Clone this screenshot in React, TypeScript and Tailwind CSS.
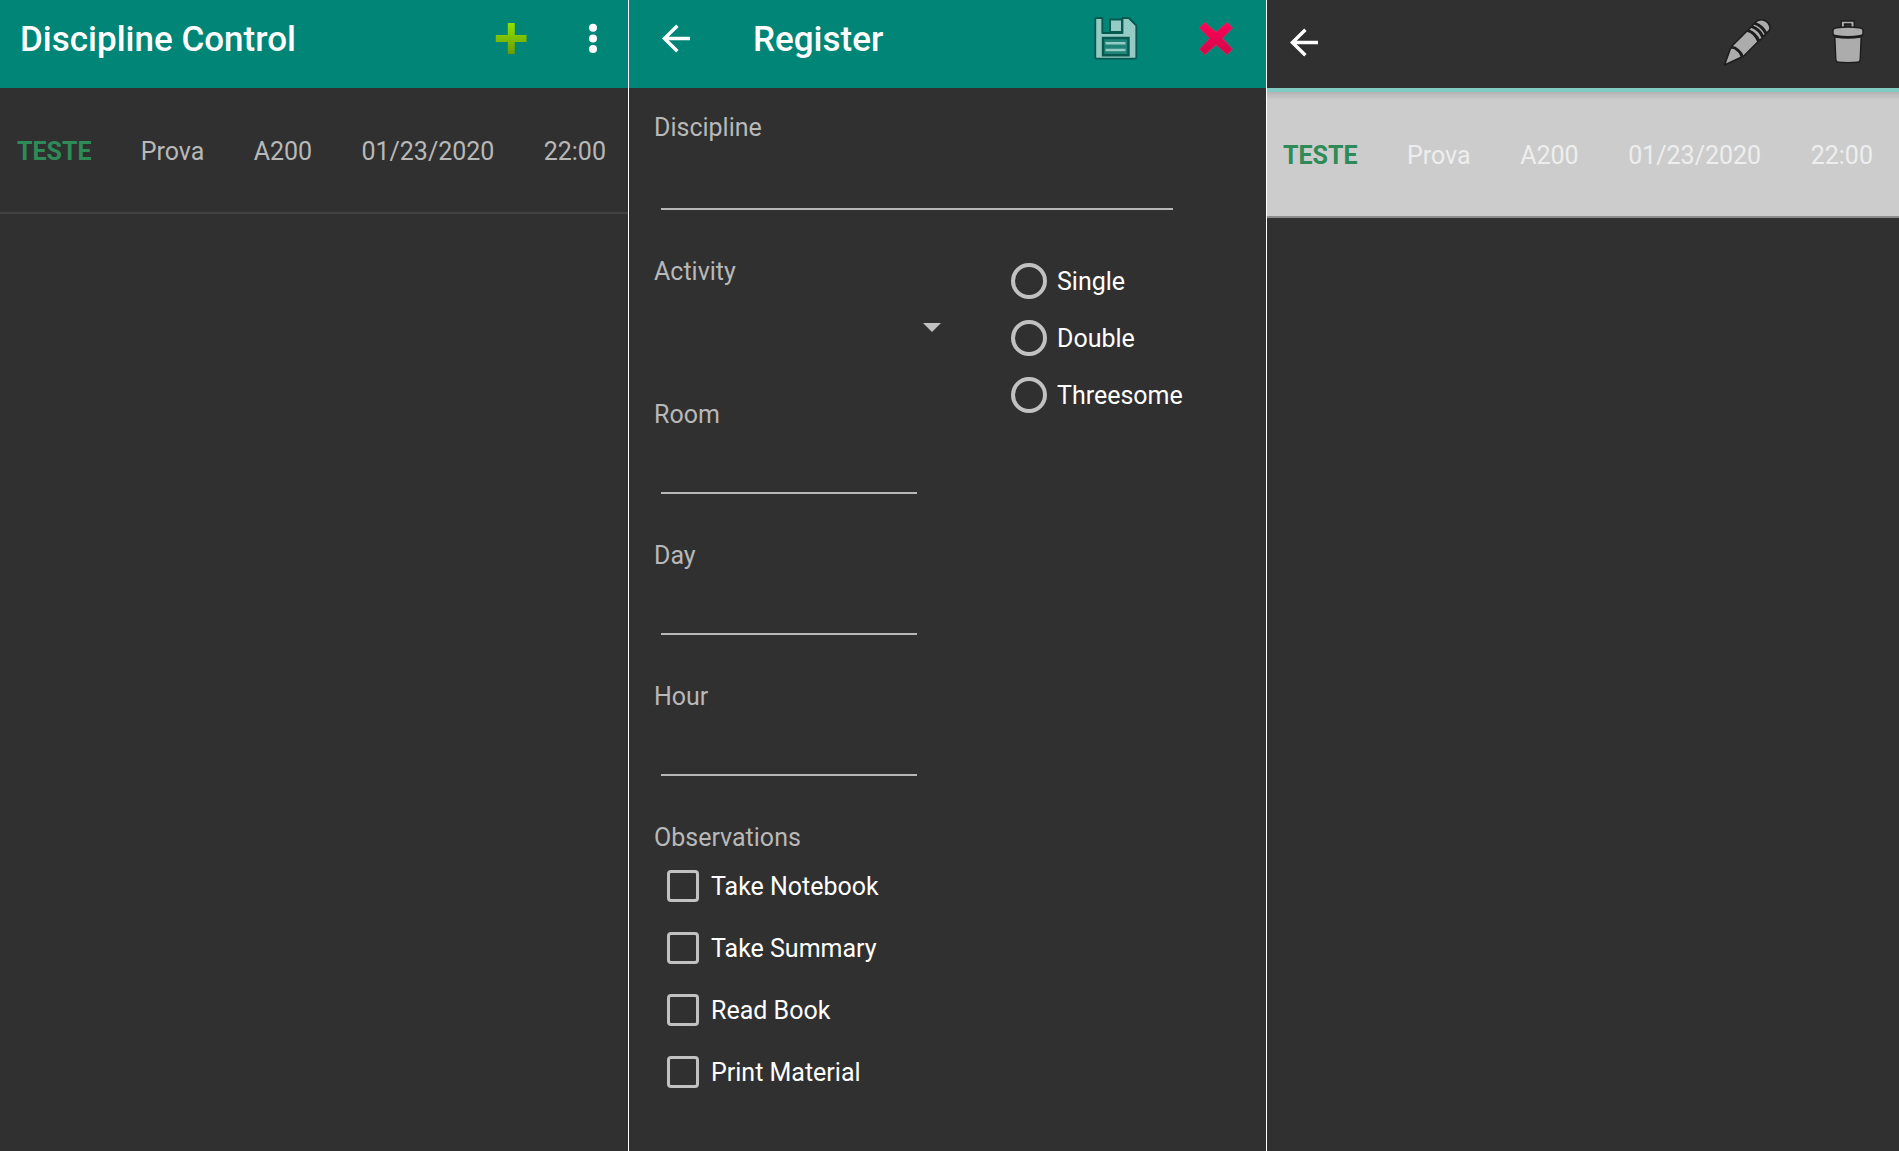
import type { ReactNode } from "react";

function ArrowIcon() {
  return (
    <svg viewBox="0 0 48 48" className="size-12" fill="none" stroke="#fff" strokeWidth="3.4" aria-hidden="true">
      <path d="M38 24.500H12.500M25.400 11.700 12.400 24.500l13 12.800" />
    </svg>
  );
}

function PlusIcon() {
  return (
    <svg viewBox="0 0 48 48" className="size-12" aria-hidden="true">
      <defs>
        <linearGradient id="plusFill" x1="0" y1="0" x2="0" y2="1">
          <stop offset="0" stopColor="#8fe300" />
          <stop offset="1" stopColor="#6b9a00" />
        </linearGradient>
      </defs>
      <path d="M20.8 9h7v12h11.7v7H27.8v12h-7V28H8.8v-7h12z" fill="url(#plusFill)" />
    </svg>
  );
}

function DotsIcon() {
  return (
    <svg viewBox="0 0 48 48" className="size-12" fill="#fff" aria-hidden="true">
      <circle cx="24" cy="13.7" r="4" />
      <circle cx="24" cy="24.4" r="4" />
      <circle cx="24" cy="35.1" r="4" />
    </svg>
  );
}

function SaveIcon() {
  return (
    <svg viewBox="0 0 48 48" className="size-12" aria-hidden="true">
      <path
        d="M4.5 4h5.800v15H30.500V4h6.300l7.500 7.500v31.700q0 1.500-1.500 1.500H4.800q-1.500 0-1.500-1.500V5.200Q3.300 4 4.500 4z"
        fill="#94cbc4"
        stroke="#07584e"
        strokeWidth="1.8"
        strokeLinejoin="round"
      />
      <path d="M18 5.500h12V18H18z" fill="#94cbc4" stroke="#07584e" strokeWidth="2" />
      <path d="M11 24h25.500v17.200H11z" fill="#1f8377" stroke="#07584e" strokeWidth="2.400" />
      <path d="M13.500 29.200h20M13.500 36h20" stroke="#94cbc4" strokeWidth="2.400" />
    </svg>
  );
}

function CrossIcon() {
  return (
    <svg viewBox="0 0 48 48" className="size-12" aria-hidden="true">
      <defs>
        <linearGradient id="crossFill" x1="0" y1="0" x2="0" y2="1">
          <stop offset="0" stopColor="#ff0559" />
          <stop offset="1" stopColor="#d30548" />
        </linearGradient>
      </defs>
      <path
        d="M12.800 8.300 24 18 35.200 8.300l5.400 5.600L30.500 24.300l10.100 10.900-5.400 5.600L24 31 12.800 40.800l-5.400-5.600L17.500 24.300 7.400 13.900z"
        fill="url(#crossFill)"
        stroke="#b8405f"
        strokeWidth="0.8"
      />
    </svg>
  );
}

function PencilIcon() {
  return (
    <svg viewBox="0 0 48 48" className="size-12" fill="#acacac" stroke="#1c1c1c" strokeWidth="1.5" strokeLinejoin="round" aria-hidden="true">
      <path d="M1.500 47 7.600 30.300q3.600-1 6.400 2.200 3.500 2 4.300 6.800z" />
      <path d="M8.500 28.500 24 13q7.500 1.800 11 10.800L20 38.800q-.8-4-4.500-7-3-3-7-3.300z" />
      <path d="M25.300 12 28 9q8 2.500 11.300 10.800l-2.800 3Q33 14.500 25.300 12z" />
      <path d="M29 8l2-2.300q8 2.500 11.500 10.500l-2 2.300Q37 10.500 29 8z" />
      <path d="M32 4.800q3.500-4.300 9-2.600 5 2 6 7.300.3 3.500-3.500 5.500Q40 7.500 32 4.800z" />
    </svg>
  );
}

function TrashIcon() {
  return (
    <svg viewBox="0 0 48 48" className="size-12" fill="#acacac" stroke="#1c1c1c" strokeWidth="1.400" strokeLinejoin="round" aria-hidden="true">
      <path d="M10.800 18.500h26.400l-1 23q-.2 2.500-2.600 2.700-9.600.8-19.200 0-2.400-.2-2.600-2.700z" />
      <path d="M17.200 10V3h13v7h-3.400V6h-6.200v4z" />
      <path d="M9 12.500q0-2 4-2.700 11-1.600 22 0 4 .7 4 2.700v3.200q0 1.500-3 2-12 1.800-24 0-3-.5-3-2z" />
      <path d="M11.500 18.800q12.500 2 25 0" fill="none" strokeWidth="2" />
    </svg>
  );
}

function IconButton({ label, children }: { label: string; children: ReactNode }) {
  return (
    <button type="button" aria-label={label} className="shrink-0">
      {children}
    </button>
  );
}

const entry = ["Prova", "A200", "01/23/2020", "22:00"];

function EntryCells({ label }: { label: string }) {
  return (
    <>
      <span className="font-bold text-[#2e8b57]">{label}</span>
      {entry.map((value) => (
        <span key={value}>{value}</span>
      ))}
    </>
  );
}

function Field({ id, label, className }: { id: string; label: string; className: string }) {
  return (
    <div className="flex flex-col">
      <label htmlFor={id} className="text-[#b8b8b8]">
        {label}
      </label>
      <input id={id} type="text" className={`ml-[7px] border-b-2 border-[#b8b8b8] bg-transparent text-white outline-none ${className}`} />
    </div>
  );
}

export default function App() {
  return (
    <div className="grid min-h-screen grid-cols-[629fr_638fr_632fr] bg-[#303030] font-['Roboto',sans-serif] text-[25px] leading-[30px]">
      <section className="min-w-0 border-r border-white">
        <header className="flex h-[88px] items-center bg-[#008577] pr-[11px] pb-3 pl-5">
          <h1 className="mt-1 flex-1 text-[35px] leading-10 font-medium text-white">Discipline Control</h1>
          <div className="flex gap-[34px]">
            <IconButton label="Add">
              <PlusIcon />
            </IconButton>
            <IconButton label="More options">
              <DotsIcon />
            </IconButton>
          </div>
        </header>
        <ul>
          <li className="flex h-[126px] items-center justify-between border-b-2 border-[#424242] pt-1 pr-[22px] pl-[17px] text-[#b8b8b8]">
            <EntryCells label="TESTE" />
          </li>
        </ul>
      </section>

      <section className="min-w-0 border-r border-white">
        <header className="flex h-[88px] items-center bg-[#008577] pr-[26px] pb-3 pl-[23px]">
          <IconButton label="Back">
            <ArrowIcon />
          </IconButton>
          <h1 className="mt-1 ml-[53px] flex-1 text-[35px] leading-10 font-medium text-white">Register</h1>
          <div className="flex gap-[52px]">
            <IconButton label="Save">
              <SaveIcon />
            </IconButton>
            <IconButton label="Cancel">
              <CrossIcon />
            </IconButton>
          </div>
        </header>

        <form className="flex flex-col gap-[47px] pt-[25px] pl-[25px]">
          <Field id="discipline" label="Discipline" className="mr-[93px] h-[67px]" />

          <div className="flex gap-[70px]">
            <div className="flex w-[287px] flex-col gap-[47px]">
              <div className="flex flex-col">
                <label htmlFor="activity" className="text-[#b8b8b8]">
                  Activity
                </label>
                <div className="relative flex items-center pt-4">
                  <select id="activity" className="h-[50px] w-full appearance-none bg-transparent pl-2 text-white outline-none">
                    <option value=""></option>
                    <option value="prova">Prova</option>
                  </select>
                  <svg viewBox="0 0 18 10" className="pointer-events-none absolute right-0 h-[10px] w-[18px]" fill="#c1c1c1" aria-hidden="true">
                    <path d="M0 0h18L9 9z" />
                  </svg>
                </div>
              </div>
              <Field id="room" label="Room" className="mr-6 h-[64px]" />
              <Field id="day" label="Day" className="mr-6 h-[64px]" />
              <Field id="hour" label="Hour" className="mr-6 h-[64px]" />
            </div>

            <fieldset className="flex flex-col gap-[21px] pt-[6px] text-white">
              {["Single", "Double", "Threesome"].map((name) => (
                <label key={name} className="flex h-9 items-center gap-[10px]">
                  <input
                    type="radio"
                    name="group"
                    value={name}
                    className="size-9 appearance-none rounded-full border-4 border-[#c1c1c1] checked:bg-[#008577]"
                  />
                  <span className="pt-[2px]">{name}</span>
                </label>
              ))}
            </fieldset>
          </div>

          <fieldset className="text-white">
            <legend className="text-[#b8b8b8]">Observations</legend>
            <div className="flex flex-col pt-[2px] pl-[13px]">
              {["Take Notebook", "Take Summary", "Read Book", "Print Material"].map((name) => (
                <label key={name} className="flex h-[62px] items-center gap-3">
                  <input type="checkbox" className="size-8 appearance-none rounded-[4px] border-[3px] border-[#c1c1c1] checked:bg-[#008577]" />
                  <span className="pt-[2px]">{name}</span>
                </label>
              ))}
            </div>
          </fieldset>
        </form>
      </section>

      <section className="min-w-0">
        <header className="flex h-[92px] items-center justify-between border-b-4 border-[#80cbc4] pr-[27px] pb-1 pl-[13px]">
          <IconButton label="Back">
            <ArrowIcon />
          </IconButton>
          <div className="flex gap-[53px]">
            <IconButton label="Edit">
              <PencilIcon />
            </IconButton>
            <IconButton label="Delete">
              <TrashIcon />
            </IconButton>
          </div>
        </header>
        <ul>
          <li className="flex h-[126px] items-center justify-between border-b-2 border-[#8c8c8c] bg-[#cccccc] bg-linear-to-b from-[#b4b4b4] to-[#cccccc] to-[8px] pt-1 pr-[26px] pl-4 text-[#eeeeee]">
            <EntryCells label="TESTE" />
          </li>
        </ul>
      </section>
    </div>
  );
}
